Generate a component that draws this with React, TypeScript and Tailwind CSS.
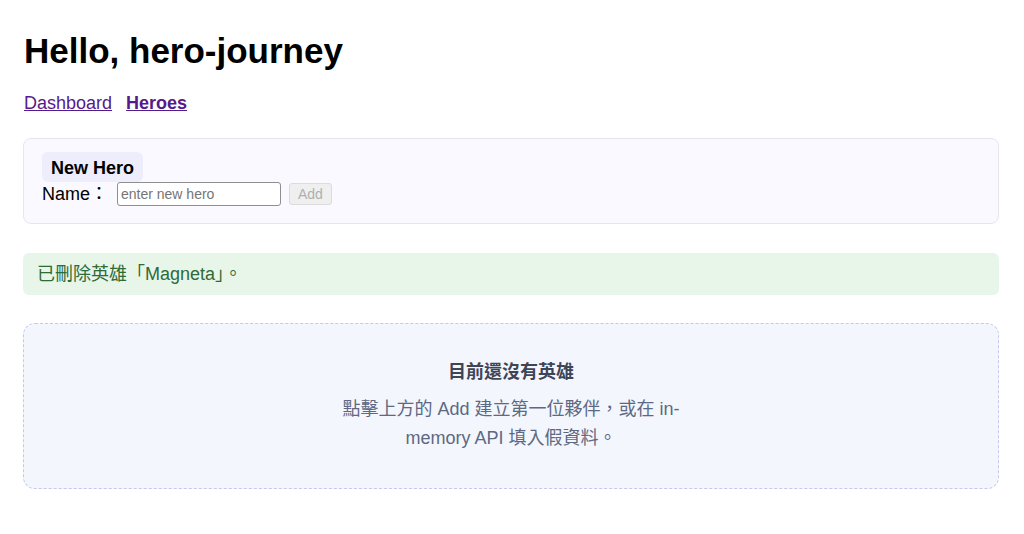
const FONT = '"Liberation Sans", "Noto Sans CJK TC", Arial, sans-serif';

export default function App() {
  return (
    <div className="min-h-[534px] bg-white pl-[23px] pt-[30px] text-black" style={{ fontFamily: FONT }}>
      <h1 className="ml-px text-[35px] font-bold leading-[42px]">Hello, hero-journey</h1>

      {/* 導覽 */}
      <nav className="ml-px mt-[18px] flex gap-[14px] text-[18px] leading-[26px]">
        <a href="#" className="text-[#551a8b] underline">
          Dashboard
        </a>
        <a href="#" className="font-bold text-[#551a8b] underline">
          Heroes
        </a>
      </nav>

      {/* 新增英雄 */}
      <div className="mt-[22px] w-[976px] rounded-lg border border-[#e6e6f0] bg-[#f9f9ff] px-[18px] pb-[17px] pt-[13px]">
        <div className="inline-block rounded-md bg-[#ededfc] px-[9px] pt-[5px] pb-[3px] text-[18px] font-bold leading-[22px]">
          New Hero
        </div>
        <div className="flex items-center text-[18px] leading-[24px]">
          <label htmlFor="hero-name" className="w-[75px]">
            Name：
          </label>
          <input
            id="hero-name"
            placeholder="enter new hero"
            className="h-[24px] w-[164px] rounded-[3px] border border-[#8f8f8f] bg-white px-[3px] text-[14px] text-black placeholder:text-[#757575] outline-none"
          />
          <button
            disabled
            className="ml-[8px] h-[22px] rounded-[3px] border border-[#dcdcdc] bg-[#efefef] px-[8px] text-[14px] leading-[20px] text-[#b0b0b0]"
          >
            Add
          </button>
        </div>
      </div>

      {/* 訊息 */}
      <div className="mt-[29px] w-[976px] rounded-md bg-[#e8f5e9] px-[14px] py-[9px] text-[18px] leading-[24px] text-[#2e6b36]">
        已刪除英雄「Magneta」。
      </div>

      {/* 空狀態 */}
      <div className="mt-7 flex h-[166px] w-[976px] flex-col items-center rounded-xl border border-dashed border-[#c9c6ee] bg-[#f3f6fd] pt-[35px] text-center">
        <h2 className="text-[18px] font-bold leading-[26px] text-[#3d4557]">目前還沒有英雄</h2>
        <p className="mt-[10px] max-w-[370px] text-[18px] leading-[29px] text-[#5d6983]">
          點擊上方的 Add 建立第一位夥伴，或在 in-memory API 填入假資料。
        </p>
      </div>
    </div>
  );
}
